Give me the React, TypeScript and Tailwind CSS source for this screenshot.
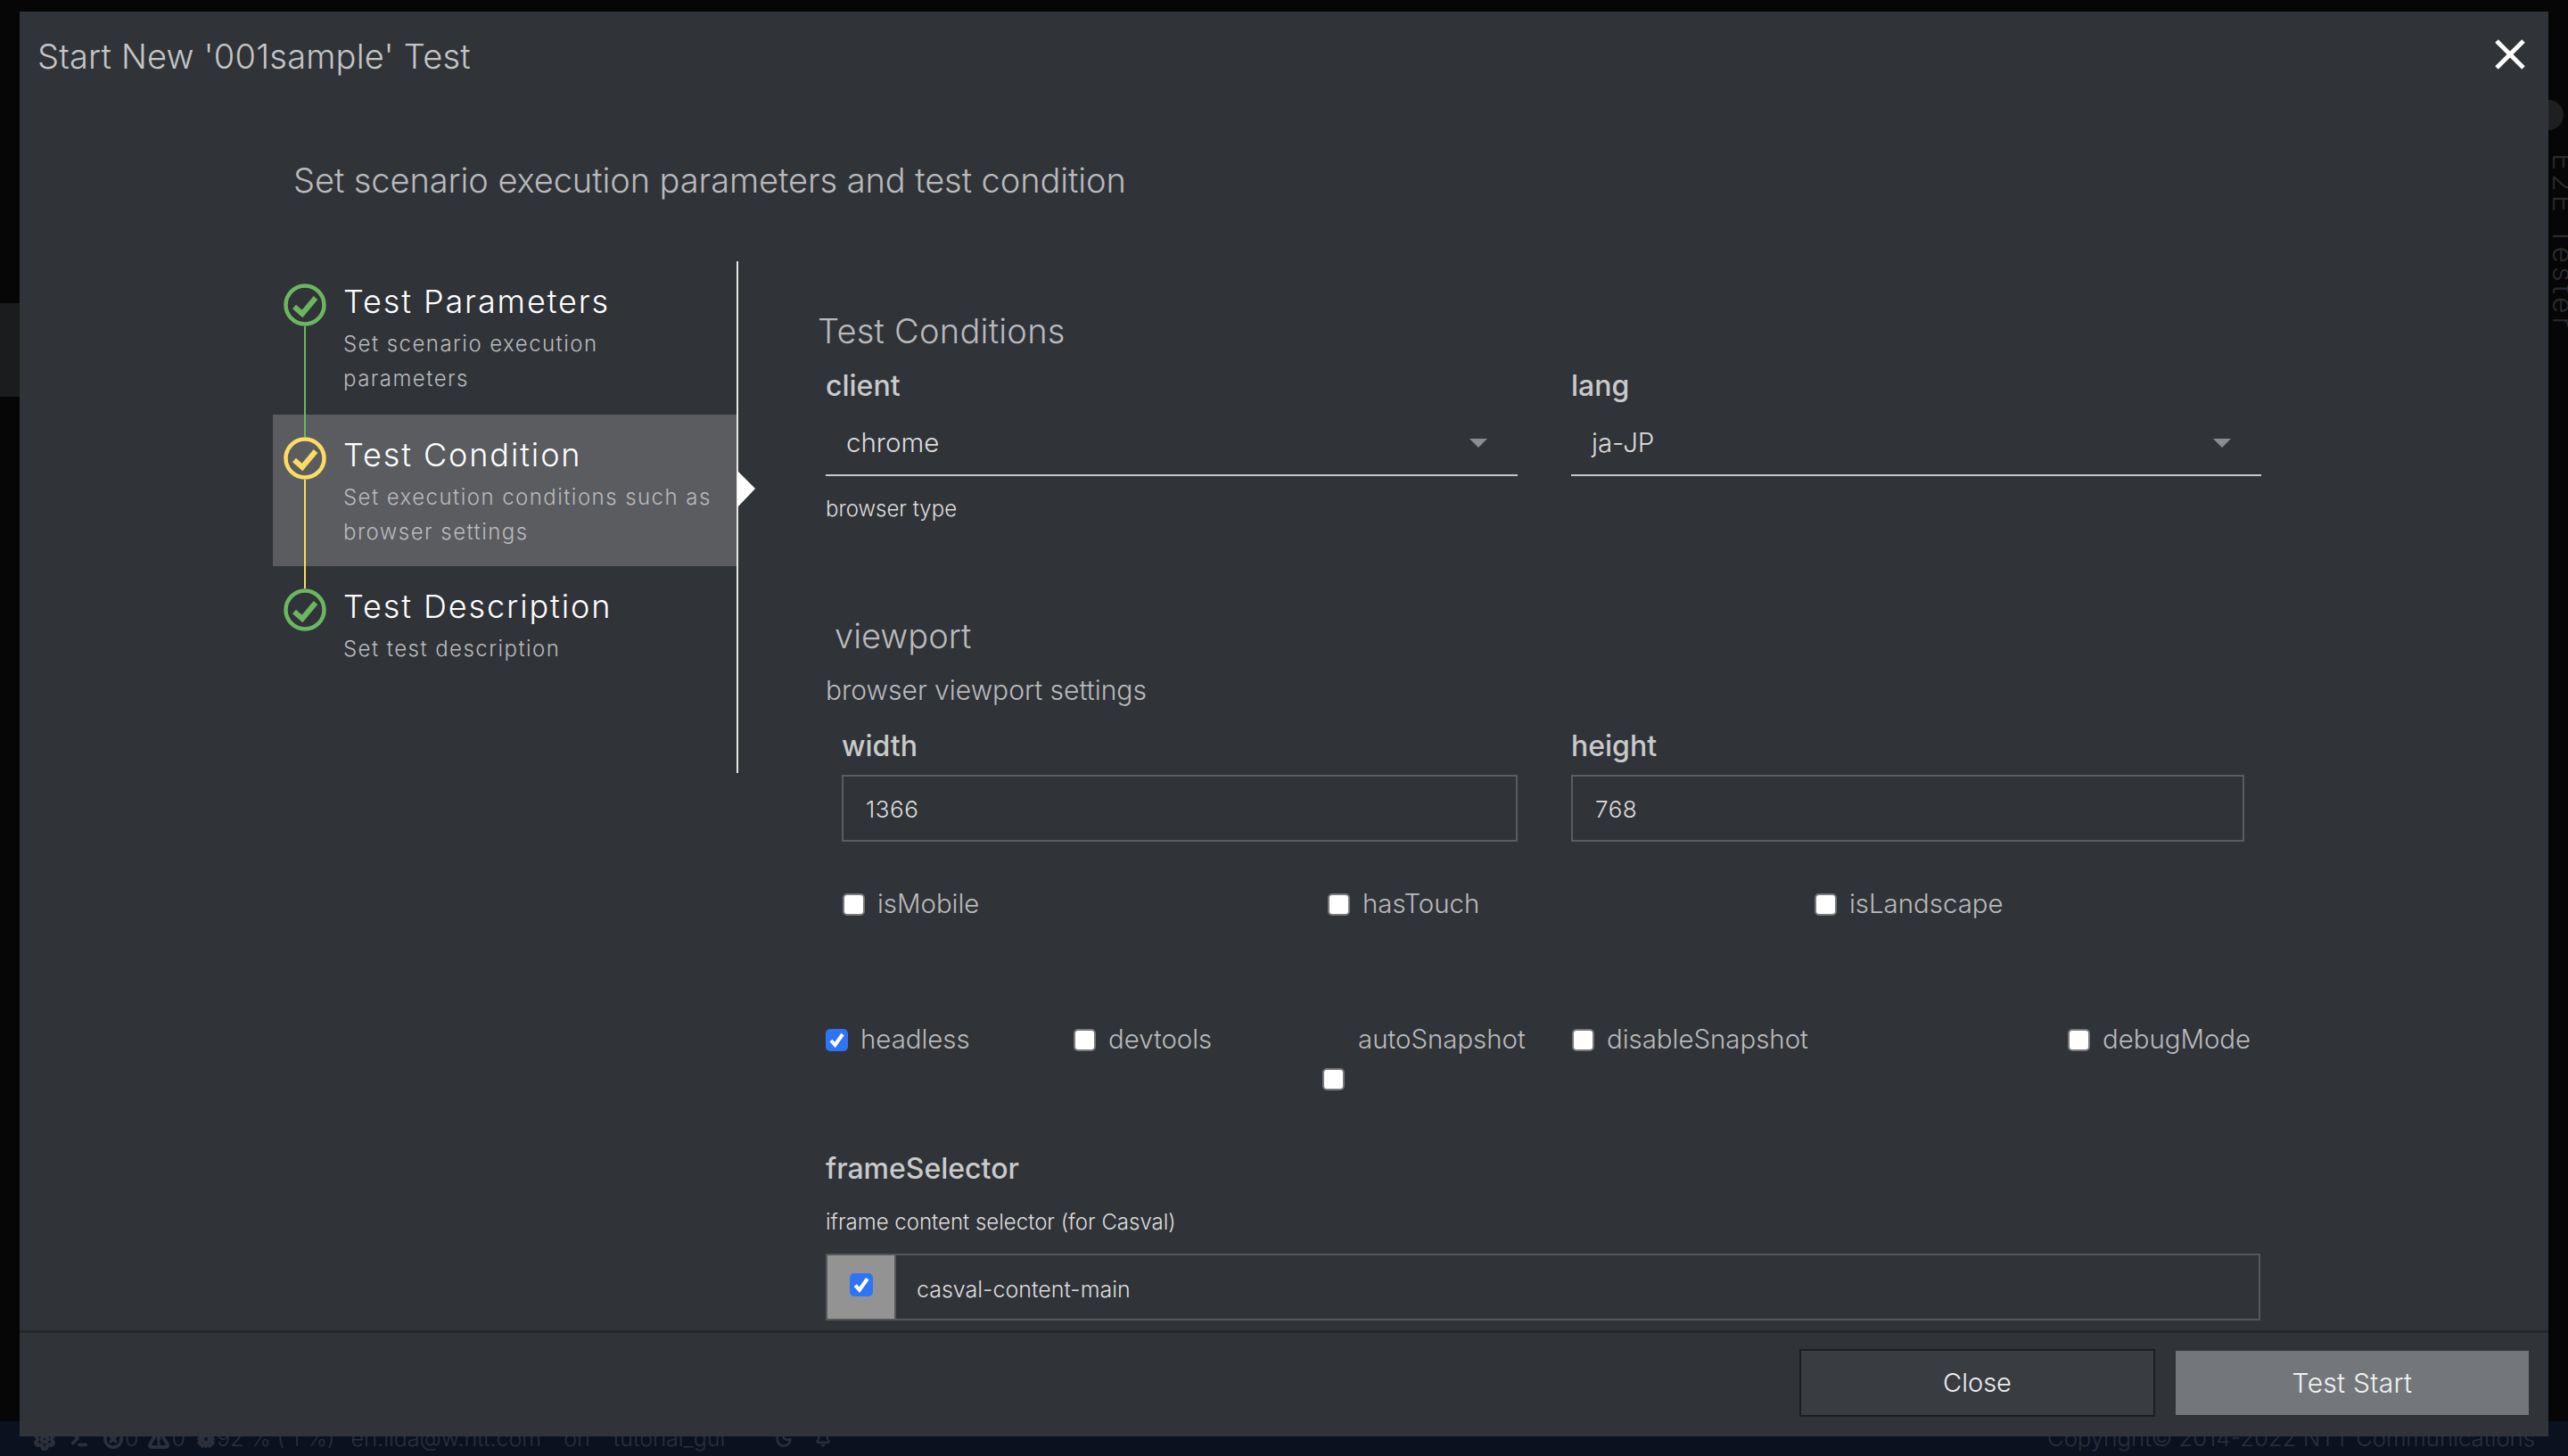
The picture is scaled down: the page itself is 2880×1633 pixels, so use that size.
import React from 'react';
import { Settings, Terminal, XCircle, AlertTriangle, Cpu, Moon, Bell } from 'lucide-react';

function CheckCircle({ color }: { color: string }) {
  return (
    <svg width="48" height="48" viewBox="0 0 48 48" className="shrink-0 relative z-10 mt-[2px]">
      <circle cx="24" cy="24" r="21.5" fill="none" stroke={color} strokeWidth="4.5" />
      <polyline points="12,26 21,34 36,16" fill="none" stroke={color} strokeWidth="6" />
    </svg>
  );
}

function Step({ title, sub, color, line, active, h }: { title: string; sub: string[]; color: string; line?: string; active?: boolean; h: string }) {
  return (
    <div className={`relative flex items-start pl-[12px] pt-[23px] gap-[19px] ${h} ${active ? 'bg-[#5a5c60]' : ''}`}>
      {line && <div className={`absolute left-[35px] top-[73px] w-[2px] z-10 ${line}`} />}
      <CheckCircle color={color} />
      <div>
        <div className="text-[36px] leading-[44px] font-light text-white tracking-[1.9px]">{title}</div>
        <div className="mt-[6px] text-[24px] leading-[39px] font-light text-[#b9babc] tracking-[1.45px]">
          {sub.map((s) => (
            <div key={s}>{s}</div>
          ))}
        </div>
      </div>
      {active && (
        <svg width="21" height="41" viewBox="0 0 21 41" className="absolute left-[521px] top-[63px]">
          <polygon points="0,0 20,20 0,41" fill="#fff" />
        </svg>
      )}
    </div>
  );
}

function Box({ checked, size = 'w-[25px] h-[25px]' }: { checked?: boolean; size?: string }) {
  return (
    <span className={`relative block shrink-0 ${size}`}>
      <input
        type="checkbox"
        defaultChecked={checked}
        className="peer block appearance-none w-full h-full m-0 rounded-[5px] border-2 border-[#77787b] bg-white checked:bg-[#2f74f5] checked:border-[#2f74f5]"
      />
      <svg viewBox="0 0 25 25" className="absolute inset-0 w-full h-full hidden peer-checked:block">
        <polyline points="6,13 10.5,18 19,6" fill="none" stroke="#fff" strokeWidth="4" />
      </svg>
    </span>
  );
}

function Check({ label, w, checked }: { label: string; w?: string; checked?: boolean }) {
  return (
    <label className={`flex items-center h-[36px] gap-[14px] ${w ?? ''}`}>
      <Box checked={checked} />
      <span className="text-[29.4px] leading-[36px] font-light text-[#b9babc]">{label}</span>
    </label>
  );
}

function Select({ value, w }: { value: string; w: string }) {
  return (
    <div className={w}>
      <div className="h-[81px] border-b-2 border-[#c8c8c8] pt-[8px] pl-[23px] pr-[34px] flex items-center justify-between">
        <span className="text-[29.5px] font-light text-[#dddddd]">{value}</span>
        <svg width="20" height="10" viewBox="0 0 20 10"><polygon points="0,0 20,0 10,10" fill="#8c8d8f" /></svg>
      </div>
    </div>
  );
}

function Field({ label, value, w }: { label: string; value: string; w: string }) {
  return (
    <div className={w}>
      <div className="text-[32px] leading-[40px] font-medium text-[#c9cacb]">{label}</div>
      <input
        defaultValue={value}
        className="mt-[12px] w-full h-[75px] border-2 border-[#5a5c60] bg-transparent px-[25px] pt-[2px] text-[26px] tracking-[0.5px] font-light text-[#dddddd] outline-none"
      />
    </div>
  );
}

export default function App() {
  return (
    <div className="relative w-[2880px] h-[1633px] overflow-hidden bg-[#060606] [font-family:Inter,sans-serif]">
      {/* page behind the dialog */}
      <div className="flex flex-col h-full">
        <div className="flex-1 flex justify-between">
          <div className="w-[22px] mt-[340px] h-[105px] bg-[#1b1c1e]" />
          <div className="w-[22px] pt-[112px] flex flex-col items-start text-[#2a2b2e]">
            <div className="w-[34px] h-[34px] rounded-full bg-[#1e1f21] -ml-[17px]" />
            <div className="mt-[26px] -ml-[8px] [writing-mode:vertical-rl] text-[32px] font-light tracking-[4px] whitespace-nowrap">E2E Tester</div>
          </div>
        </div>
        <div className="h-[39px] bg-[#0a1220] flex items-center justify-between pl-[37px] pr-[37px] text-[#2b303a]">
          <div className="flex items-center text-[25px] font-light whitespace-nowrap">
            <Settings size={26} strokeWidth={4} />
            <Terminal size={22} strokeWidth={4} className="ml-[15px]" />
            <XCircle size={22} strokeWidth={4} className="ml-[16px]" />
            <span className="ml-[2px]">0</span>
            <AlertTriangle size={24} strokeWidth={4} className="ml-[11px]" />
            <span className="ml-[2px]">0</span>
            <Cpu size={20} strokeWidth={4} className="ml-[13px]" />
            <span className="ml-[2px]">92 % ( 1 %)</span>
            <span className="ml-[18px]">eri.iida@w.ntt.com</span>
            <span className="ml-[25px]">on</span>
            <span className="ml-[26px]">tutorial_gui</span>
            <Moon size={20} strokeWidth={3} className="ml-[56px]" />
            <Bell size={18} strokeWidth={3} className="ml-[25px]" />
          </div>
          <div className="text-[25.7px] font-light whitespace-nowrap">Copyright© 2014-2022 NTT Communications</div>
        </div>
      </div>

      {/* dialog */}
      <div className="absolute left-[22px] top-[13px] w-[2836px] h-[1598px] bg-[#303338] flex flex-col">
        <div className="h-[95px] shrink-0 flex items-center justify-between pl-[20px] pr-[26px]">
          <div className="pt-[6px] text-[38px] font-light tracking-[0.2px] text-[#c4c5c7] whitespace-nowrap">Start New '001sample' Test</div>
          <svg width="34" height="34" viewBox="0 0 34 34">
            <path d="M2 2 L32 32 M32 2 L2 32" stroke="#fff" strokeWidth="5" fill="none" />
          </svg>
        </div>

        <div className="flex-1 min-h-0 overflow-hidden">
          <div className="pl-[307px] pt-[72px] h-[185px] text-[38px] leading-[44px] font-light tracking-[-0.07px] text-[#b9babc] whitespace-nowrap">
            Set scenario execution parameters and test condition
          </div>
          <div className="flex items-start pl-[284px]">
            <div className="w-[522px] h-[574px] shrink-0 border-r-2 border-[#e6e6e6]">
              <Step h="h-[172px]" title="Test Parameters" sub={['Set scenario execution', 'parameters']} color="#6db661" line="h-[124px] bg-[#6db661]" />
              <Step h="h-[170px]" active title="Test Condition" sub={['Set execution conditions such as', 'browser settings']} color="#fcdc62" line="h-[122px] bg-[#fcdc62]" />
              <Step h="h-[170px]" title="Test Description" sub={['Set test description']} color="#6db661" />
            </div>

            <div className="pl-[89px] w-[1720px] shrink-0">
              <div className="mt-[56px] text-[38px] leading-[44px] font-light tracking-[0.25px] text-[#b9babc]">Test Conditions</div>
              <div className="pl-[9px]">
                <div className="mt-[20px] flex gap-[60px]">
                  <div className="w-[776px]">
                    <div className="text-[32px] leading-[40px] font-medium text-[#c9cacb]">client</div>
                    <Select value="chrome" w="w-full" />
                    <div className="mt-[22px] text-[24px] leading-[30px] text-[#dddddd] font-light">browser type</div>
                  </div>
                  <div className="w-[774px]">
                    <div className="text-[32px] leading-[40px] font-medium text-[#c9cacb]">lang</div>
                    <Select value="ja-JP" w="w-full" />
                  </div>
                </div>
                <div className="mt-[105px] ml-[10px] text-[38px] leading-[44px] font-light text-[#b9babc]">viewport</div>
                <div className="mt-[21px] text-[30px] leading-[36px] font-light text-[#b9babc]">browser viewport settings</div>
                <div className="mt-[25px] ml-[18px] flex gap-[60px]">
                  <Field label="width" value="1366" w="w-[758px]" />
                  <Field label="height" value="768" w="w-[755px]" />
                </div>
                <div className="mt-[52px] ml-[19px] flex">
                  <Check label="isMobile" w="w-[544px]" />
                  <Check label="hasTouch" w="w-[546px]" />
                  <Check label="isLandscape" />
                </div>
                <div className="mt-[116px] flex items-start h-[74px]">
                  <Check label="headless" w="w-[278px]" checked />
                  <Check label="devtools" w="w-[279px]" />
                  <div className="w-[280px]">
                    <div className="pl-[40px] text-[29.4px] leading-[36px] font-light text-[#b9babc] whitespace-nowrap">autoSnapshot</div>
                    <div className="mt-[14px]"><Box /></div>
                  </div>
                  <Check label="disableSnapshot" w="w-[556px]" />
                  <Check label="debugMode" />
                </div>
                <div className="mt-[69px] text-[32px] leading-[40px] font-medium text-[#c9cacb]">frameSelector</div>
                <div className="mt-[25px] text-[24px] leading-[30px] font-light text-[#dddddd]">iframe content selector (for Casval)</div>
                <div className="mt-[20px] h-[75px] w-[1609px] flex border-2 border-[#55575b]">
                  <div className="w-[75px] shrink-0 bg-[#939393] pt-[20px] flex justify-center items-start">
                    <Box checked size="w-[26px] h-[26px]" />
                  </div>
                  <input
                    defaultValue="casval-content-main"
                    className="flex-1 bg-transparent pl-[23px] pt-[6px] text-[25px] font-light text-[#dddddd] outline-none border-l-2 border-[#55575b]"
                  />
                </div>
              </div>
            </div>
          </div>
        </div>

        <div className="h-[119px] shrink-0 border-t-[3px] border-[#24272a] flex items-start justify-end gap-[23px] pr-[22px] pt-[18px]">
          <button className="w-[399px] h-[76px] bg-[#393c41] border-2 border-[#1c1e21] text-[29px] font-light text-[#eeeeee]">Close</button>
          <button className="w-[396px] h-[72px] mt-[2px] bg-[#73777b] text-[30px] tracking-[0.3px] font-light text-[#f2f2f2]">Test Start</button>
        </div>
      </div>
    </div>
  );
}
